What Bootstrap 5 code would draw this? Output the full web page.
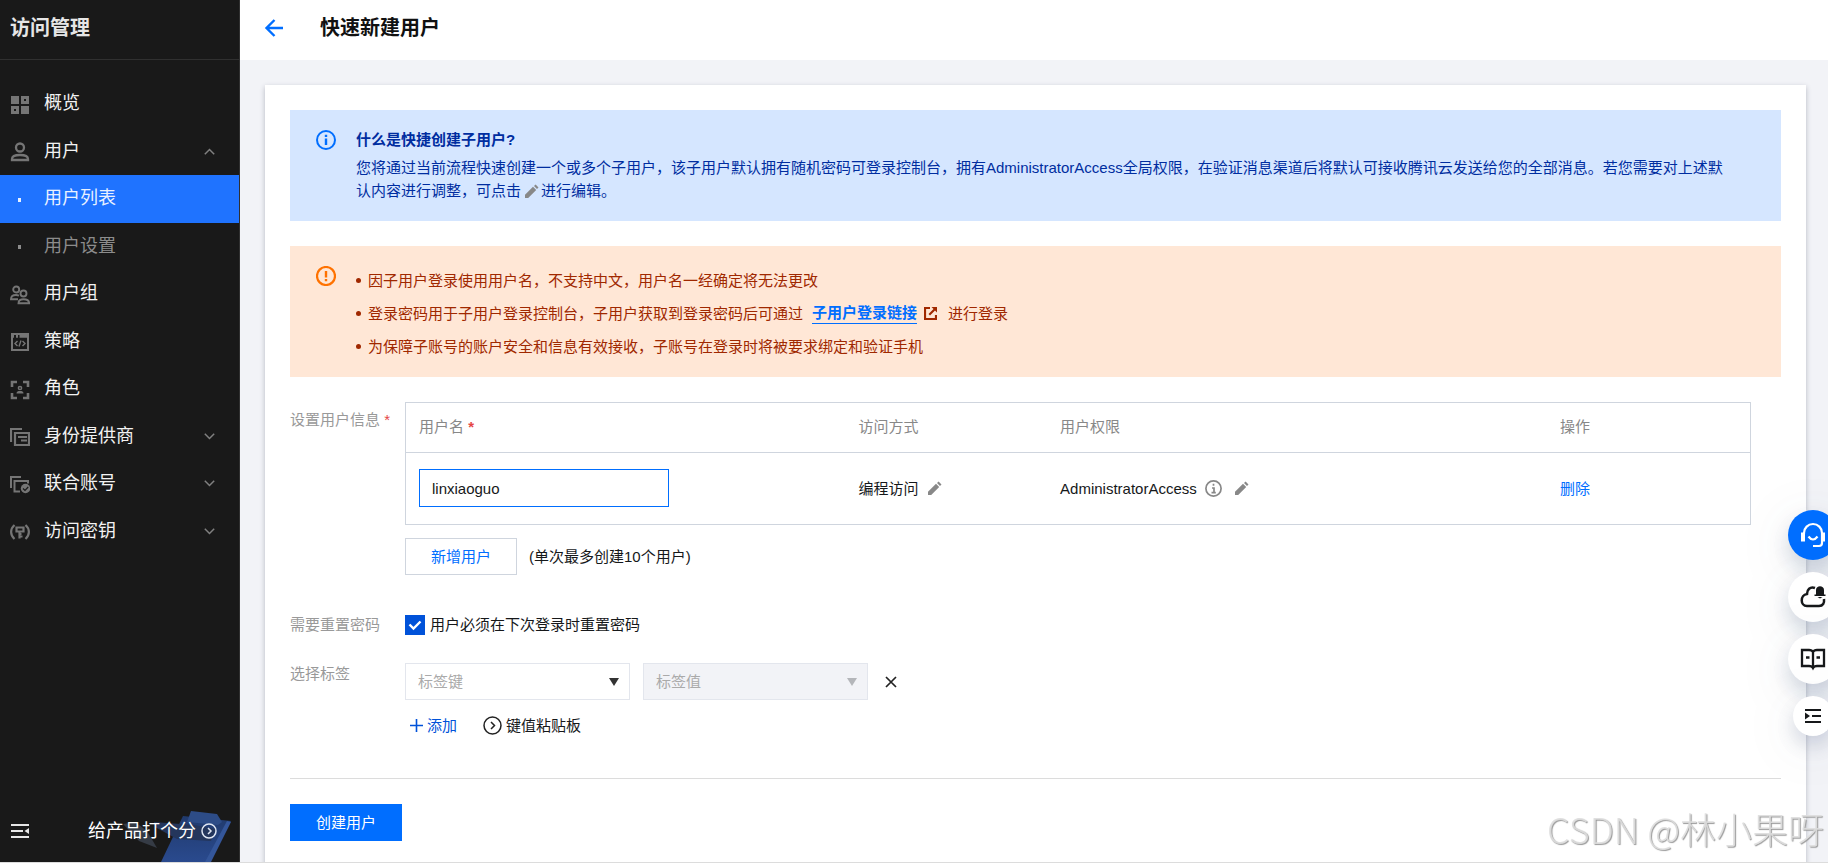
<!DOCTYPE html>
<html lang="zh-CN">
<head>
<meta charset="utf-8">
<meta name="viewport" content="width=device-width, initial-scale=1">
<title>快速新建用户 - 访问管理</title>
<link href="https://cdn.jsdelivr.net/npm/bootstrap@5.3.0/dist/css/bootstrap.min.css" rel="stylesheet">
<style>
  body { font: 15px/23px "Liberation Sans", "Noto Sans CJK SC", sans-serif; color: #16181a; background: #f2f3f7; }
  svg { display: block; flex-shrink: 0; }
  a { text-decoration: none; color: #006eff; }
  .app { border-bottom: 1px solid #dcdcdc; }
  .app > main { min-width: 0; }

  .side { width: 240px; background: #191919; border-right: 1px solid #303030; }
  .side-title { height: 60px; padding: 0 10px 2px; font-size: 20px; font-weight: 700; color: #e6e6e6; border-bottom: 1px solid #303030; }
  .side-menu { height: 475px; margin-top: 20px; display: grid; grid-auto-rows: 1fr; font-size: 18px; }
  .side-menu a { height: 100%; padding: 0 24px 0 10px; gap: 14px; color: #f2f2f2; }
  .side-menu .menu-icon { width: 20px; color: #757575; padding-top: 2px; }
  .side-menu .chev { color: #808080; margin-left: auto; }
  .side-menu .sub { color: #8c8c8c; }
  .side-menu .sub .menu-icon { color: inherit; padding-left: 8px; }
  .side-menu .current { background: #1f73ff; color: #e9f1ff; }
  .dot { width: 3px; height: 4px; background: currentColor; }
  .side-foot { height: 62px; padding: 0 22px 0 10px; color: #e6e6e6; }
  .rate { font-size: 18px; color: #fff; gap: 5px; }
  .rate-art { right: 0; bottom: 0; }

  .top { height: 60px; padding: 0 24px 5px; background: #fff; gap: 36px; }
  .top h1 { font-size: 20px; font-weight: 700; margin: 0; color: #111; }

  .panel { margin: 25px 22px 0 25px; padding: 25px; background: #fff; box-shadow: 0 2px 5px rgba(54,58,80,.32); }
  .note { padding: 0 50px 19px 26px; margin-bottom: 25px; gap: 20px; }
  .note > svg { margin-top: 20px; }
  .note-info { background: #d5e6ff; color: #002da0; }
  .note-info > div { padding-top: 18px; }
  .note-info h2 { font-size: 15px; line-height: 23px; font-weight: 700; margin: 0 0 5px; }
  .note-info p svg { display: inline-block; margin: 0 2px 0 3px; vertical-align: -3px; }
  .note-warn { background: #ffe7d6; color: #a02800; }
  .note-warn ul { padding-top: 23px; gap: 10px; }
  .note-warn li { gap: 7px; }
  .note-warn li::before { content: ""; width: 5px; height: 5px; border-radius: 50%; background: currentColor; }
  .note-warn li a { font-weight: 700; line-height: 20px; border-bottom: 1px solid #006eff; margin-left: 2px; }

  .f-label { width: 115px; flex-shrink: 0; color: #999; }
  .req { color: #e54545; }
  .users { border: 1px solid #cfd5de; margin: 0 30px 13px 0; }
  .users table { table-layout: fixed; width: 100%; }
  .users th, .users td { padding: 0 13px; }
  .users th { height: 49px; padding-bottom: 2px; color: #888; font-weight: 400; border-bottom: 1px solid #cfd5de; }
  .users td { height: 72px; }
  .c-name { width: 32.7%; } .c-way { width: 15%; } .c-perm { width: 37.2%; }
  .box { border-radius: 0; font-size: 15px; line-height: 23px; }
  .name-box { width: 250px; height: 38px; padding: 0 12px; border: 1px solid #006eff; color: #16181a; }
  .bt { height: 37px; min-width: 112px; padding: 0 24px; border-radius: 0; font-size: 15px; line-height: 23px; }
  .bt-line { border: 1px solid #cfd5de; color: #006eff; background: #fff; }
  .bt-main, .bt-main:hover { background: #006eff; border: 0; color: #fff; }
  .users-row { margin-bottom: 38px; }
  .users-row .f-label { padding-top: 6px; }
  .reset-row { margin-bottom: 26px; }
  .tick { appearance: none; width: 20px; height: 20px; margin: 0 5px 0 0; background: #0052d9 url("data:image/svg+xml,%3Csvg xmlns='http://www.w3.org/2000/svg' viewBox='0 0 20 20'%3E%3Cpath d='M4.5 9.5l4 4 7-7' fill='none' stroke='%23fff' stroke-width='2.4'/%3E%3C/svg%3E"); }
  .sel { width: 225px; height: 37px; padding: 0 12px; border: 1px solid #e3e6ed; color: #aaa; background-size: 10px 8px; background-position: right 10px center;
    background-image: url("data:image/svg+xml,%3Csvg xmlns='http://www.w3.org/2000/svg' viewBox='0 0 10 8'%3E%3Cpath d='M0 0h10L5 8z' fill='%23333'/%3E%3C/svg%3E"); }
  .sel:disabled { background-color: #f2f3f7; color: #aaa; opacity: 1;
    background-image: url("data:image/svg+xml,%3Csvg xmlns='http://www.w3.org/2000/svg' viewBox='0 0 10 8'%3E%3Cpath d='M0 0h10L5 8z' fill='%23b4b6ba'/%3E%3C/svg%3E"); }
  .tag-row { gap: 13px; margin: 1px 0 14px; }
  .bare { border: 0; padding: 0; background: none; color: inherit; }
  .add { color: #0052d9; margin: 0 26px 0 5px; }
  .panel hr { margin: 41px 0 25px; border-top: 1px solid #dcdcdc; opacity: 1; }

  .dock { right: -10px; top: 510px; gap: 12px; z-index: 5; }
  .dock button { width: 50px; height: 50px; border: 0; padding: 0; border-radius: 50%; background: #fff; color: #16181a; box-shadow: 0 10px 20px rgba(55,75,120,.2), 0 10px 60px rgba(55,99,110,.1); }
  .dock .dock-main { background: #006eff; color: #fff; }
  .dock .dock-fold { width: 40px; height: 40px; }
  .sign { right: 4px; bottom: 13px; z-index: 6; font: 300 36px/44px "Noto Sans CJK SC", sans-serif; color: rgba(222,222,222,.9); text-shadow: 1px 1px 1px #999; pointer-events: none; }
</style>
</head>
<body>
<svg width="0" height="0" class="position-absolute" aria-hidden="true">
  <symbol id="pen" viewBox="0 0 15 15"><path d="M1 14v-3.2L9 2.8 12.2 6l-8 8zM10 1.9L11.6.6l2.900 2.800L13 5z" fill="#888"/></symbol>
  <symbol id="down" viewBox="0 0 11 7"><path d="M.8.8l4.700 4.700L10.200.8" fill="none" stroke="currentColor" stroke-width="1.500"/></symbol>
</svg>

<div class="app d-flex vh-100 overflow-hidden">
  <nav class="side d-flex flex-column flex-shrink-0">
    <div class="side-title d-flex align-items-center">访问管理</div>
    <ul class="side-menu list-unstyled mb-auto">
      <li><a href="#" class="d-flex align-items-center"><span class="menu-icon"><svg width="20" height="20" fill="currentColor"><path d="M1 1h8v8H1zM1 11h8v8H1zm3 3v2h2v-2zM11 1h8v8h-8zm3 3v2h2V4zM11 11h8v8h-8z" fill-rule="evenodd"/></svg></span>概览</a></li>
      <li><a href="#" class="d-flex align-items-center"><span class="menu-icon"><svg width="20" height="20" fill="none" stroke="currentColor" stroke-width="2.300"><circle cx="10" cy="5.500" r="4"/><path d="M2 18v-1c0-3 3-4 8-4s8 1 8 4v1z"/></svg></span>用户<svg class="chev" width="11" height="7"><path d="M.8 6.200l4.700-4.700 4.700 4.700" fill="none" stroke="currentColor" stroke-width="1.500"/></svg></a></li>
      <li><a href="#" class="sub current d-flex align-items-center"><span class="menu-icon"><span class="dot d-block"></span></span>用户列表</a></li>
      <li><a href="#" class="sub d-flex align-items-center"><span class="menu-icon"><span class="dot d-block"></span></span>用户设置</a></li>
      <li><a href="#" class="d-flex align-items-center"><span class="menu-icon"><svg width="20" height="20" fill="none" stroke="currentColor" stroke-width="1.900"><circle cx="6.200" cy="4.500" r="3"/><circle cx="13.500" cy="8.500" r="3"/><path d="M8 14.200H1c0-3 2-4.200 5-4.200 1.200 0 2 .2 3 .6M8.500 18.200c0-3 2-4 5-4s5.600 1 5.600 4z"/></svg></span>用户组</a></li>
      <li><a href="#" class="d-flex align-items-center"><span class="menu-icon"><svg width="20" height="20" fill="none" stroke="currentColor"><path d="M2 2h16v16H2z" stroke-width="2"/><path d="M2 4h2m2 0h2m1.500 0H18" stroke-width="3.500"/><path d="M7.500 9L5 11.500 7.500 14m5-5l2.500 2.500-2.500 2.500M11 8.500l-2 6" stroke-width="1.400"/></svg></span>策略</a></li>
      <li><a href="#" class="d-flex align-items-center"><span class="menu-icon"><svg width="20" height="20" fill="none" stroke="currentColor"><path d="M2 7V2h5m6 0h5v5M2 13v5h5m6 0h5v-5" stroke-width="2.600"/><circle cx="10" cy="8" r="1.600" stroke-width="1.500"/><path d="M6.500 13.500c0-2 1.500-2.500 3.500-2.500s3.500.5 3.500 2.500z" fill="currentColor" stroke="none"/></svg></span>角色</a></li>
      <li><a href="#" class="d-flex align-items-center"><span class="menu-icon"><svg width="20" height="20" fill="none" stroke="currentColor" stroke-width="2.200"><path d="M1 15V2h11M5 6h14v12H5z"/><path d="M8 10h9M11 13.500h6" stroke-width="1.800"/></svg></span>身份提供商<svg class="chev" width="11" height="7"><use href="#down"/></svg></a></li>
      <li><a href="#" class="d-flex align-items-center"><span class="menu-icon"><svg width="20" height="20" fill="none" stroke="currentColor" stroke-width="2"><path d="M1 13V2h10M10 16.500H4.500V6H18v2.500"/><circle cx="15.500" cy="13.500" r="4.700" fill="currentColor" stroke="none"/><path d="M13 13.500l2 2 3.200-3.500" stroke="#191919" stroke-width="1.200"/></svg></span>联合账号<svg class="chev" width="11" height="7"><use href="#down"/></svg></a></li>
      <li><a href="#" class="d-flex align-items-center"><span class="menu-icon"><svg width="20" height="20" fill="none" stroke="currentColor" stroke-width="2.200"><path d="M4.500 3C0 7 0 13 4.500 17M15.500 3c4.500 4 4.500 10 0 14"/><path d="M6.500 5.500h7v4h-7zM9.500 9.500v7M9.500 14.500h3M9.500 12h2"/></svg></span>访问密钥<svg class="chev" width="11" height="7"><use href="#down"/></svg></a></li>
    </ul>
    <div class="side-foot position-relative d-flex align-items-center justify-content-between">
      <svg class="rate-art position-absolute" width="120" height="52" viewBox="0 0 120 52" aria-hidden="true">
        <defs><linearGradient id="clip" x1="0" y1="0" x2="0" y2="1"><stop offset="0" stop-color="#203a6d"/><stop offset="1" stop-color="#2a4a8e"/></linearGradient></defs>
        <path d="M4 14l12-2 12 9 10 17-18-7z" fill="#353b45"/>
        <path d="M64 6l48 5-22 41H42z" fill="url(#clip)"/>
        <path d="M108 11l4 1-20 40h-6z" fill="#34569a"/>
        <path d="M72 1l26 3 5 8-4 3-31-3z" fill="#2d4c87"/>
        <path d="M35 12l40 3 22 4-5 12-34-2-22-12z" fill="#24365c"/>
      </svg>
      <button type="button" class="bare position-relative" aria-label="收起菜单"><svg width="20" height="18" fill="none" stroke="currentColor" stroke-width="1.800"><path d="M1 3h18M1 9h12M1 15h18"/><path d="M19 6v6L14.500 9z" fill="currentColor" stroke="none"/></svg></button>
      <a href="#" class="rate position-relative d-flex align-items-center">给产品打个分<svg width="16" height="16" fill="none" stroke="#dfe6f2" stroke-width="1.500"><circle cx="8" cy="8" r="7"/><path d="M7 5l3 3-3 3"/></svg></a>
    </div>
  </nav>

  <main class="flex-fill d-flex flex-column">
    <header class="top d-flex align-items-center flex-shrink-0">
      <a href="#" aria-label="返回"><svg width="20" height="20" fill="none" stroke="#006eff" stroke-width="2.400"><path d="M19 10H3M10.500 2L2.500 10l8 8"/></svg></a>
      <h1>快速新建用户</h1>
    </header>

    <form class="panel flex-fill">
      <section class="note note-info d-flex">
        <svg width="20" height="20" fill="none" stroke="#006eff" stroke-width="2"><circle cx="10" cy="10" r="9"/><path d="M10 4.800v2.200M10 8.500v6.500" stroke-width="2.400"/></svg>
        <div>
          <h2>什么是快捷创建子用户?</h2>
          <p class="mb-0">您将通过当前流程快速创建一个或多个子用户，该子用户默认拥有随机密码可登录控制台，拥有AdministratorAccess全局权限，在验证消息渠道后将默认可接收腾讯云发送给您的全部消息。若您需要对上述默认内容进行调整，可点击<svg width="15" height="15"><use href="#pen"/></svg>进行编辑。</p>
        </div>
      </section>

      <section class="note note-warn d-flex">
        <svg width="20" height="20" fill="none" stroke="#ff7200" stroke-width="2.200"><circle cx="10" cy="10" r="9"/><path d="M10 5v6.500M10 13v2.200" stroke-width="2.400"/></svg>
        <ul class="list-unstyled d-flex flex-column mb-0">
          <li class="d-flex align-items-center">因子用户登录使用用户名，不支持中文，用户名一经确定将无法更改</li>
          <li class="d-flex align-items-center">登录密码用于子用户登录控制台，子用户获取到登录密码后可通过<a href="#">子用户登录链接</a><svg width="13" height="13"><path d="M6 1H1v11h11V8" fill="none" stroke="#a02800" stroke-width="2.200"/><path d="M7.500 0H13v5.500l-2-2-5 5L4.500 7l5-5z" fill="#a02800"/></svg><span class="ms-1">进行登录</span></li>
          <li class="d-flex align-items-center">为保障子账号的账户安全和信息有效接收，子账号在登录时将被要求绑定和验证手机</li>
        </ul>
      </section>

      <div class="users-row d-flex">
        <div class="f-label">设置用户信息 <span class="req">*</span></div>
        <div class="flex-fill">
          <div class="users">
            <table>
              <thead><tr><th class="c-name">用户名 <b class="req">*</b></th><th class="c-way">访问方式</th><th class="c-perm">用户权限</th><th>操作</th></tr></thead>
              <tbody><tr>
                <td><input class="form-control box name-box" type="text" value="linxiaoguo" aria-label="用户名"></td>
                <td><span class="d-flex align-items-center gap-2">编程访问<button type="button" class="bare" aria-label="编辑访问方式"><svg width="15" height="15"><use href="#pen"/></svg></button></span></td>
                <td><span class="d-flex align-items-center gap-2">AdministratorAccess<svg width="17" height="17" fill="none" stroke="#888" stroke-width="1.700"><circle cx="8.500" cy="8.500" r="7.600"/><path d="M8.500 3.800v2M7 8h2v5M6.500 12.700h4.300" stroke-width="1.700"/></svg><button type="button" class="bare ms-1" aria-label="编辑用户权限"><svg width="15" height="15"><use href="#pen"/></svg></button></span></td>
                <td><a href="#">删除</a></td>
              </tr></tbody>
            </table>
          </div>
          <div class="d-flex align-items-center">
            <button type="button" class="btn bt bt-line me-2">新增用户</button><span class="ms-1">(单次最多创建10个用户)</span>
          </div>
        </div>
      </div>

      <div class="reset-row d-flex align-items-center">
        <div class="f-label">需要重置密码</div>
        <input class="tick" type="checkbox" id="reset" checked><label for="reset">用户必须在下次登录时重置密码</label>
      </div>

      <div class="d-flex">
        <div class="f-label">选择标签</div>
        <div>
          <div class="tag-row d-flex align-items-center">
            <select class="form-select box sel" aria-label="标签键"><option>标签键</option></select>
            <select class="form-select box sel" aria-label="标签值" disabled><option>标签值</option></select>
            <button type="button" class="bare ms-1" aria-label="移除标签"><svg width="12" height="12" fill="none" stroke="#222" stroke-width="1.700"><path d="M1 1l10 10M11 1L1 11"/></svg></button>
          </div>
          <div class="d-flex align-items-center">
            <button type="button" class="bare add d-flex align-items-center gap-1"><svg width="13" height="13" stroke="currentColor" stroke-width="1.600"><path d="M0 6.500h13M6.500 0v13"/></svg>添加</button>
            <button type="button" class="bare d-flex align-items-center gap-1"><svg width="19" height="19" fill="none" stroke="#222" stroke-width="1.500"><circle cx="9.500" cy="9.500" r="8.500"/><path d="M8 6l3.500 3.500L8 13"/></svg>键值粘贴板</button>
          </div>
        </div>
      </div>

      <hr>
      <button type="submit" class="btn bt bt-main">创建用户</button>
    </form>
  </main>
</div>

<aside class="dock position-fixed d-flex flex-column align-items-center">
  <button type="button" class="dock-main d-flex align-items-center justify-content-center" aria-label="在线客服"><svg width="26" height="26" fill="none" stroke="currentColor" stroke-width="2.200"><path d="M4 12v-1a9 9 0 0 1 18 0v10q0 3-3 3h-6"/><path d="M3 10.500v9M23 10.500v9" stroke-width="4"/><path d="M8.500 14.500q4.500 6 9 0"/></svg></button>
  <button type="button" class="d-flex align-items-center justify-content-center" aria-label="云通知"><svg width="26" height="26" fill="none" stroke="currentColor" stroke-width="2.500"><path d="M15 4C10 2 7 6 7 10c-7 1-7 12 0 12h12c4 0 5.500-3 5-7"/><path d="M14.500 12v-1.500h1.500V6c0-5 8-5 8 0v4.500h1.500V12zM17.500 13h5l-2.500 1.500z" fill="currentColor" stroke="none"/></svg></button>
  <button type="button" class="d-flex align-items-center justify-content-center" aria-label="文档"><svg width="26" height="26" fill="none" stroke="currentColor" stroke-width="2.300"><path d="M13 6q-1-2-4-2H2v16h7q3 0 4 2 1-2 4-2h7V4h-7q-3 0-4 2v16M6 11.500h3.500M16.500 11.500H20"/></svg></button>
  <button type="button" class="dock-fold d-flex align-items-center justify-content-center" aria-label="收起"><svg width="16" height="16" fill="none" stroke="currentColor" stroke-width="2"><path d="M0 2h16M7 8h9M0 14h16"/><path d="M0 4.500v7L5 8z" fill="currentColor" stroke="none"/></svg></button>
</aside>
<div class="sign position-fixed">CSDN @林小果呀</div>
<script src="https://cdn.jsdelivr.net/npm/bootstrap@5.3.0/dist/js/bootstrap.bundle.min.js"></script>
</body>
</html>
